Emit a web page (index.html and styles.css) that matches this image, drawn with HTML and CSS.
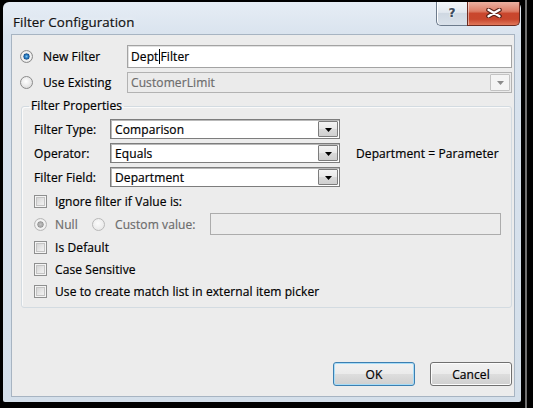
FILE: index.html
```html
<!DOCTYPE html>
<html>
<head>
<meta charset="utf-8">
<title>Filter Configuration</title>
<link rel="stylesheet" href="styles.css">
</head>
<body>
<div class="screen">
  <div class="frame">
    <div class="titlebar">
      <span class="title">Filter Configuration</span>
      <div class="caption">
        <div class="cbtn help"><span class="qmark">?</span></div>
        <div class="cbtn close">
          <svg width="16" height="10" viewBox="0 0 16 10"><path d="M2.5 1.8 L13.5 8.2 M13.5 1.8 L2.5 8.2" stroke="#5a2118" stroke-width="4.6" stroke-linecap="round" fill="none"/><path d="M2.5 1.8 L13.5 8.2 M13.5 1.8 L2.5 8.2" stroke="#ffffff" stroke-width="2.4" stroke-linecap="round" fill="none"/></svg>
        </div>
      </div>
    </div>
    <div class="client">
      <div class="source">
        <div class="opt"><span class="radio checked"></span><span>New Filter</span></div>
        <div class="textbox">Dept<span class="caret"></span>Filter</div>
        <div class="opt"><span class="radio"></span><span>Use Existing</span></div>
        <div class="combo disabled"><span class="val">CustomerLimit</span><span class="drop"><svg width="7" height="4" viewBox="0 0 7 4"><path d="M0 0H7L3.5 4Z" fill="#8a8a8a"/></svg></span></div>
      </div>

      <fieldset class="group">
        <legend>Filter Properties</legend>
        <div class="group-body">
          <div class="props">
            <span class="lbl">Filter Type:</span>
            <div class="combo"><span class="val">Comparison</span><span class="drop"><svg width="7" height="4" viewBox="0 0 7 4"><path d="M0 0H7L3.5 4Z" fill="#000"/></svg></span></div>
            <span></span>
            <span class="lbl">Operator:</span>
            <div class="combo"><span class="val">Equals</span><span class="drop"><svg width="7" height="4" viewBox="0 0 7 4"><path d="M0 0H7L3.5 4Z" fill="#000"/></svg></span></div>
            <span class="formula">Department = Parameter</span>
            <span class="lbl">Filter Field:</span>
            <div class="combo"><span class="val">Department</span><span class="drop"><svg width="7" height="4" viewBox="0 0 7 4"><path d="M0 0H7L3.5 4Z" fill="#000"/></svg></span></div>
            <span></span>
          </div>

          <div class="checks">
            <div class="row"><span class="cb"></span><span>Ignore filter if Value is:</span></div>
            <div class="row">
              <div class="subopt null-opt"><span class="radio checked disabled"></span><span class="dim">Null</span></div>
              <div class="subopt custom-opt"><span class="radio disabled"></span><span class="dim">Custom value:</span></div>
              <div class="textbox disabled-box"></div>
            </div>
            <div class="row"><span class="cb"></span><span>Is Default</span></div>
            <div class="row"><span class="cb"></span><span>Case Sensitive</span></div>
            <div class="row"><span class="cb"></span><span>Use to create match list in external item picker</span></div>
          </div>
        </div>
      </fieldset>

      <div class="buttons">
        <button class="btn default">OK</button>
        <button class="btn">Cancel</button>
      </div>
    </div>
  </div>
</div>
</body>
</html>
```

FILE: styles.css
```css
* { box-sizing: border-box; }
html, body { margin: 0; padding: 0; }
body {
  width: 533px;
  height: 408px;
  overflow: hidden;
  font-family: "Open Sans", "Noto Sans", sans-serif;
  font-size: 12px;
  letter-spacing: 0.1px;
  color: #000;
  -webkit-text-stroke: 0.2px currentColor;
}
.screen {
  width: 533px;
  height: 408px;
  padding: 2px 12px 6px 3px;
  background: linear-gradient(to right, #000 0, #000 525px, #707070 525px, #707070 527px, #000 527px);
}
.frame {
  width: 518px;
  height: 400px;
  display: flex;
  flex-direction: column;
  padding: 0 6px 5px 8px;
  border-radius: 6px 6px 2px 2px;
  background: linear-gradient(to bottom, #e6edf5 0, #d9e3ee 34px, #d4dfea 100%);
}
.titlebar {
  height: 32px;
  flex: none;
  display: flex;
  align-items: flex-start;
}
.title {
  font-size: 13.3px;
  line-height: 18px;
  margin: 11px 0 0 2px;
  color: #121212;
  text-shadow: 0 0 6px rgba(255,255,255,0.9);
}
.caption {
  margin-left: auto;
  margin-right: -5px;
  display: flex;
}
.cbtn {
  height: 24px;
  display: flex;
  align-items: center;
  justify-content: center;
  border: 1px solid #6d7b8c;
  border-top: none;
}
.help {
  width: 31px;
  border-right: none;
  border-radius: 0 0 0 5px;
  background: linear-gradient(to bottom, #f3f6f9 0, #e2e8ef 45%, #cfd8e2 50%, #d9e1ea 100%);
  box-shadow: inset 1px 0 0 #fff;
}
.qmark {
  font-family: "DejaVu Sans", sans-serif;
  font-weight: bold;
  font-size: 12px;
  line-height: 12px;
  color: #3b4a5c;
  text-shadow: 0 0 2px #fff, 0 0 2px #fff;
  margin-top: -2px;
}
.close {
  width: 53px;
  border-color: #6b2b20;
  border-radius: 0 0 5px 0;
  background: linear-gradient(to bottom, #eab0a1 0, #dd7e67 40%, #c9462d 50%, #c8472d 75%, #e0785a 100%);
  box-shadow: inset 1px 0 0 rgba(255,255,255,0.45);
}
.close svg { margin-top: -1px; }

.client {
  flex: 1;
  display: flex;
  flex-direction: column;
  background: #ececec;
  border: 1px solid #a7b4c2;
  padding: 10px 2px 10px 8px;
}

.source {
  display: grid;
  grid-template-columns: 107px 1fr;
  grid-template-rows: 23px 21px;
  row-gap: 4px;
  align-items: stretch;
}
.opt {
  display: flex;
  align-items: center;
}
.opt .radio { margin-right: 10px; }

.radio {
  flex: none;
  width: 13px;
  height: 13px;
  border-radius: 50%;
  border: 1px solid #8b8b8b;
  background: radial-gradient(circle at 45% 40%, #ffffff 0, #ececec 45%, #cfcfcf 100%);
}
.radio.checked {
  background: radial-gradient(circle at 50% 50%, #7cc6f2 0, #2d7fc4 1.6px, #0f4e8e 2.8px, #dadada 3.3px, #f6f6f6 4.3px, #d6d6d6 6px);
}
.radio.disabled {
  border-color: #b8b8b8;
  background: radial-gradient(circle at 45% 40%, #fbfbfb 0, #efefef 50%, #e2e2e2 100%);
}
.radio.checked.disabled {
  background: radial-gradient(circle at 50% 50%, #c4c4c4 0, #a6a6a6 2.2px, #8f8f8f 2.8px, #e6e6e6 3.4px, #f6f6f6 4.3px, #e0e0e0 6px);
}

.textbox {
  display: flex;
  align-items: center;
  background: #fff;
  border: 1px solid #a3a3a3;
  box-shadow: inset 1px 1px 0 #e2e2e2;
  padding-left: 3px;
}
.caret {
  display: inline-block;
  width: 1px;
  height: 15px;
  background: #000;
  margin: 0 0 0 1px;
}

.combo {
  display: flex;
  align-items: center;
  background: #fff;
  border: 1px solid #7d7d7d;
  box-shadow: inset 1px 1px 0 #b9b9b9;
  padding: 1px 1px 1px 4px;
}
.combo .val { flex: 1; }
.drop {
  flex: none;
  width: 20px;
  align-self: stretch;
  display: flex;
  align-items: center;
  justify-content: center;
  border: 1px solid #7c7c7c;
  border-radius: 1px;
  background: linear-gradient(to bottom, #f4f4f4 0, #e8e8e8 50%, #dadada 51%, #cfcfcf 100%);
}
.drop svg { margin-top: 1px; }
.combo.disabled {
  background: #ebebeb;
  border-color: #b2b2b2;
  box-shadow: none;
  padding-left: 3px;
  color: #6d6d6d;
}
.combo.disabled .drop {
  border-color: #c3c3c3;
  background: #f4f4f4;
}

.group {
  margin: 5px 0 0 1px;
  padding: 0;
  border: 1px solid #d3dbe1;
  border-radius: 3px;
  box-shadow: inset 1px 1px 0 #fafafa;
  min-width: 0;
}
.group legend {
  margin-left: 7px;
  padding: 0 2px;
  line-height: 16px;
}
.group-body {
  padding: 5px 0 5px 12px;
}
.props {
  display: grid;
  grid-template-columns: 76px 230px auto;
  grid-template-rows: repeat(3, 20px);
  row-gap: 4px;
  align-items: center;
}
.props .combo { align-self: stretch; }
.formula { margin-left: 16px; }

.checks {
  margin-top: 3px;
  display: grid;
  grid-template-rows: 22px 24px 22px 22px 22px;
}
.row {
  display: flex;
  align-items: center;
}
.cb {
  flex: none;
  width: 13px;
  height: 13px;
  margin-right: 8px;
  border: 1px solid #8e8f8f;
  background: linear-gradient(135deg, #cdcdcd 0, #e9e9e9 60%, #f7f7f7 100%);
  box-shadow: inset 0 0 0 1px #f4f4f4, inset 0 0 0 2px #c4c4c4;
}
.subopt {
  display: flex;
  align-items: center;
}
.subopt .radio { margin-right: 8px; }
.null-opt { width: 58px; }
.custom-opt { width: 118px; }
.custom-opt .radio { margin-right: 10px; }
.dim { color: #6d6d6d; }
.disabled-box {
  width: 291px;
  height: 22px;
  background: #ececec;
  border: 1px solid #acacac;
  box-shadow: none;
}

.buttons {
  margin-top: auto;
  display: flex;
  justify-content: flex-end;
  gap: 15px;
}
.btn {
  width: 82px;
  height: 24px;
  padding: 0;
  font-family: "Open Sans", "Noto Sans", sans-serif;
  font-size: 12px;
  letter-spacing: 0.1px;
  -webkit-text-stroke: 0.2px currentColor;
  color: #000;
  border: 1px solid #707070;
  border-radius: 3px;
  background: linear-gradient(to bottom, #f2f2f2 0, #ebebeb 48%, #dddddd 52%, #cfcfcf 100%);
  box-shadow: inset 0 0 0 1px #fcfcfc;
}
.btn.default {
  border-color: #3c7fb1;
  box-shadow: inset 0 0 0 1px #a7dcf7;
}
```
